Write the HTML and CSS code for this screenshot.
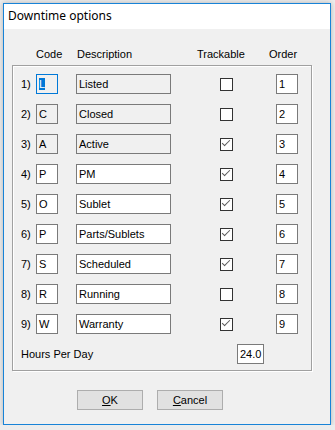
FILE: index.html
```html
<!DOCTYPE html>
<html lang="en">
<head>
    <meta charset="UTF-8">
    <title>Downtime options</title>
    <link rel="stylesheet" href="styles.css">
</head>
<body>
    <div class="window">
        <div class="titlebar">Downtime options</div>
        <div class="content">
            <div class="head">
                <span class="h-code">Code</span>
                <span class="h-desc">Description</span>
                <span class="h-track">Trackable</span>
                <span class="h-order">Order</span>
            </div>

            <div class="group">
                <div class="row">
                    <span class="num">1)</span>
                    <span class="box code readonly focus"><span class="sel">L</span></span>
                    <span class="box desc readonly">Listed</span>
                    <span class="check"></span>
                    <span class="box order">1</span>
                </div>
                <div class="row">
                    <span class="num">2)</span>
                    <span class="box code readonly">C</span>
                    <span class="box desc readonly">Closed</span>
                    <span class="check"></span>
                    <span class="box order">2</span>
                </div>
                <div class="row">
                    <span class="num">3)</span>
                    <span class="box code readonly">A</span>
                    <span class="box desc readonly">Active</span>
                    <span class="check checked"></span>
                    <span class="box order">3</span>
                </div>
                <div class="row">
                    <span class="num">4)</span>
                    <span class="box code">P</span>
                    <span class="box desc">PM</span>
                    <span class="check checked"></span>
                    <span class="box order">4</span>
                </div>
                <div class="row">
                    <span class="num">5)</span>
                    <span class="box code">O</span>
                    <span class="box desc">Sublet</span>
                    <span class="check checked"></span>
                    <span class="box order">5</span>
                </div>
                <div class="row">
                    <span class="num">6)</span>
                    <span class="box code">P</span>
                    <span class="box desc">Parts/Sublets</span>
                    <span class="check checked"></span>
                    <span class="box order">6</span>
                </div>
                <div class="row">
                    <span class="num">7)</span>
                    <span class="box code">S</span>
                    <span class="box desc">Scheduled</span>
                    <span class="check checked"></span>
                    <span class="box order">7</span>
                </div>
                <div class="row">
                    <span class="num">8)</span>
                    <span class="box code">R</span>
                    <span class="box desc">Running</span>
                    <span class="check"></span>
                    <span class="box order">8</span>
                </div>
                <div class="row">
                    <span class="num">9)</span>
                    <span class="box code">W</span>
                    <span class="box desc">Warranty</span>
                    <span class="check checked"></span>
                    <span class="box order">9</span>
                </div>

                <div class="hours">
                    <span class="num">Hours Per Day</span>
                    <span class="box hours-val">24.0</span>
                </div>
            </div>

            <div class="buttons">
                <button class="btn"><u>O</u>K</button>
                <button class="btn"><u>C</u>ancel</button>
            </div>
        </div>
    </div>
</body>
</html>
```

FILE: styles.css
```css
body {
    margin: 0;
    padding: 3px 0 0 3px;
    background: #ececec;
    font-family: "Liberation Sans", Arial, sans-serif;
    font-size: 11px;
    color: #000;
}

.window {
    box-sizing: border-box;
    width: 328px;
    height: 422px;
    border: 1px solid #1883d7;
    background: #f0f0f0;
    box-shadow: 0 0 5px rgba(0, 0, 0, 0.25);
    display: flex;
    flex-direction: column;
}

.titlebar {
    height: 25px;
    line-height: 24px;
    background: #fff;
    padding-left: 4px;
    font-family: "Noto Sans", "Open Sans", sans-serif;
    font-size: 12px;
}

.content {
    flex: 1;
}

/* column headings above the group */
.head {
    display: flex;
    height: 13px;
    line-height: 13px;
    margin-top: 19px;
}

.h-code { margin-left: 32px; width: 41px; }
.h-desc { width: 120px; }
.h-track { width: 72px; }

.group {
    width: 300px;
    box-sizing: border-box;
    margin: 4px 0 0 8px;
    padding: 8px 0 6px 0;
    border: 1px solid #a0a0a0;
    box-shadow: 1px 1px 0 #fff, inset 1px 1px 0 #fff;
}

.row,
.hours {
    display: flex;
    align-items: center;
    height: 20px;
    margin-bottom: 10px;
}

.hours {
    margin-bottom: 0;
}

.num {
    width: 23px;
    padding-left: 8px;
    box-sizing: border-box;
    white-space: nowrap;
}

.box {
    box-sizing: border-box;
    height: 20px;
    line-height: 18px;
    padding-left: 2px;
    border: 1px solid #7a7a7a;
    background: #fff;
}

.box.readonly {
    background: #f0f0f0;
}

.box.focus {
    border-color: #0078d7;
}

.sel {
    background: #0078d7;
    color: #fff;
}

.code {
    width: 22px;
}

.desc {
    width: 95px;
    margin-left: 18px;
}

.check {
    box-sizing: border-box;
    width: 13px;
    height: 13px;
    margin-left: 49px;
    border: 1px solid #333;
    background: #fff;
    position: relative;
}

.check.checked::after {
    content: "";
    position: absolute;
    left: 1px;
    top: 1px;
    width: 7px;
    height: 3px;
    border-left: 1.5px solid #5a5a5a;
    border-bottom: 1.5px solid #5a5a5a;
    transform: rotate(-45deg);
}

.order {
    width: 22px;
    margin-left: 43px;
}

.hours .num {
    width: auto;
}

.hours-val {
    width: 27px;
    margin-left: auto;
    margin-right: 47px;
}

.buttons {
    display: flex;
    margin: 19px 0 0 73px;
    gap: 14px;
}

.btn {
    width: 66px;
    height: 20px;
    padding: 0;
    border: 1px solid #adadad;
    background: #e1e1e1;
    font-family: "Liberation Sans", Arial, sans-serif;
    font-size: 11px;
    color: #000;
}
```
